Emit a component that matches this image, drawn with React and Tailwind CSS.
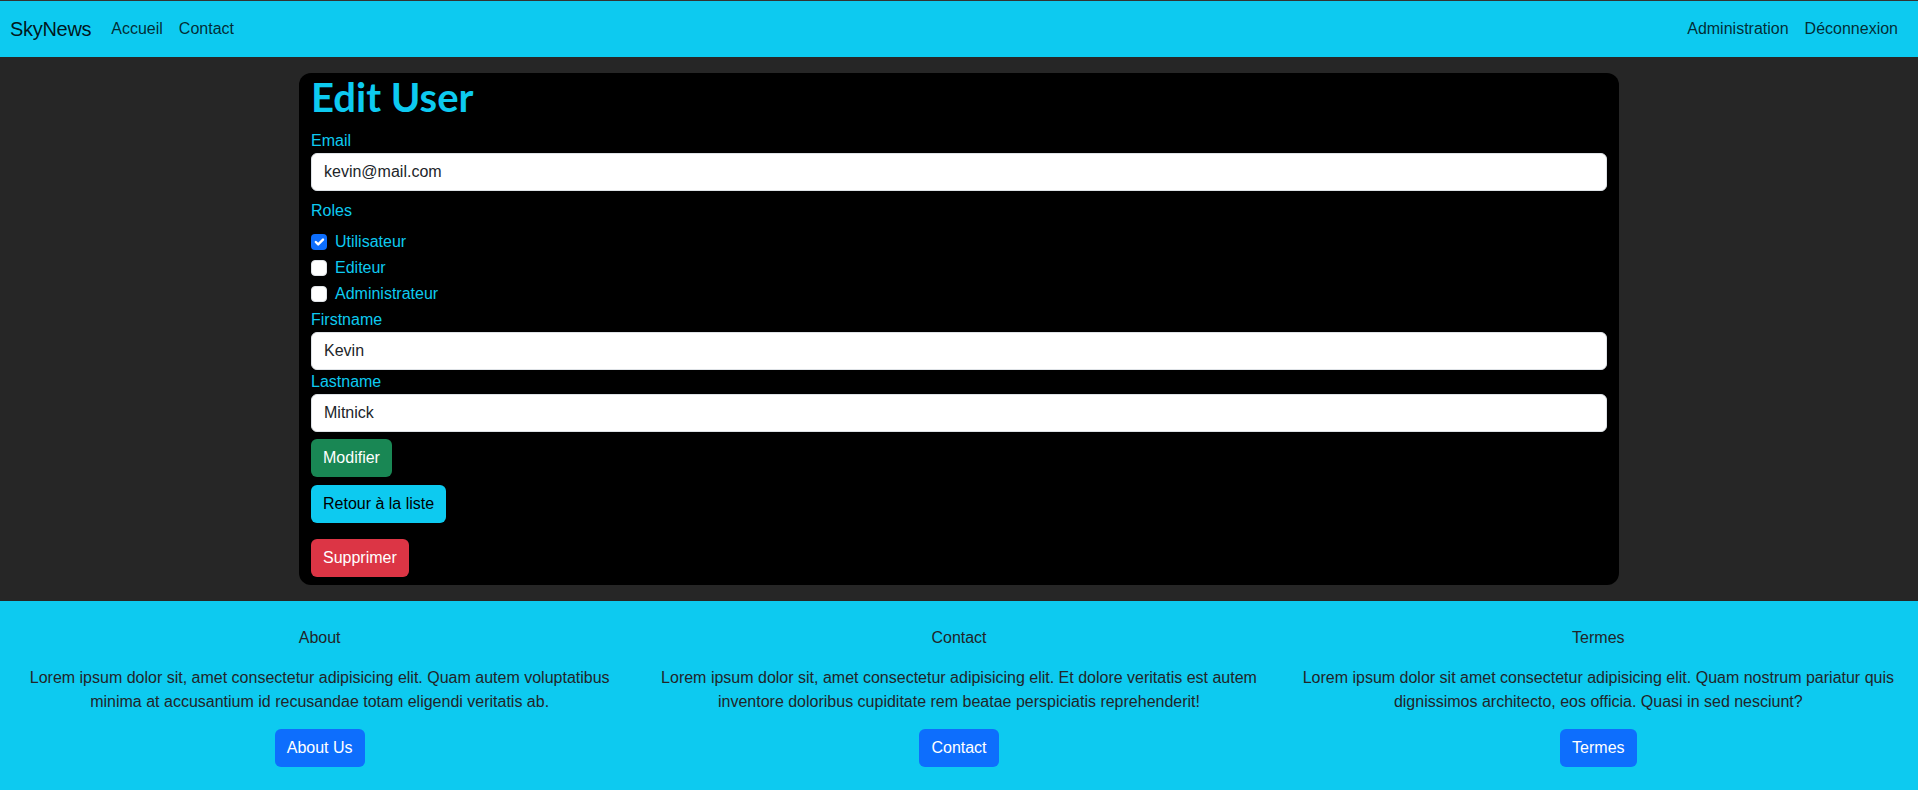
import React from 'react';

// Case à cocher façon Bootstrap
const RoleCheck = ({ checked, label }) => (
  <div className="flex items-center h-6 mb-[2px]">
    {checked ? (
      <span className="w-4 h-4 rounded bg-[#0d6efd] flex items-center justify-center">
        <svg viewBox="0 0 20 20" className="w-4 h-4">
          <path fill="none" stroke="#fff" strokeLinecap="round" strokeLinejoin="round" strokeWidth="3" d="m6 10 3 3 6-6" />
        </svg>
      </span>
    ) : (
      <span className="w-4 h-4 rounded bg-white border border-[#dee2e6]"></span>
    )}
    <span className="ml-2 text-[#0dcaf0] leading-6">{label}</span>
  </div>
);

const Field = ({ label, value }) => (
  <div>
    <label className="block leading-6 text-[#0dcaf0]">{label}</label>
    <input
      readOnly
      defaultValue={value}
      className="block w-full h-[38px] px-3 bg-white border border-[#dee2e6] rounded-md text-[#212529] leading-6 outline-none"
    />
  </div>
);

const footerCols = [
  {
    title: 'About',
    lines: [
      'Lorem ipsum dolor sit, amet consectetur adipisicing elit. Quam autem voluptatibus',
      'minima at accusantium id recusandae totam eligendi veritatis ab.'
    ],
    button: 'About Us'
  },
  {
    title: 'Contact',
    lines: [
      'Lorem ipsum dolor sit, amet consectetur adipisicing elit. Et dolore veritatis est autem',
      'inventore doloribus cupiditate rem beatae perspiciatis reprehenderit!'
    ],
    button: 'Contact'
  },
  {
    title: 'Termes',
    lines: [
      'Lorem ipsum dolor sit amet consectetur adipisicing elit. Quam nostrum pariatur quis',
      'dignissimos architecto, eos officia. Quasi in sed nesciunt?'
    ],
    button: 'Termes'
  }
];

export default function App() {
  return (
    <div className="min-h-[790px] bg-[#262626] font-['Liberation_Sans',Arial,sans-serif] text-base">
      <div className="h-px bg-[#333333]"></div>

      {/* Navbar */}
      <nav className="h-14 bg-[#0dcaf0] flex items-center justify-between pl-[10px] pr-5">
        <div className="flex items-center">
          <a className="text-[20px] leading-[30px] text-black/90 tracking-[-0.3px] mr-5">SkyNews</a>
          <a className="leading-6 text-black/80 mr-4">Accueil</a>
          <a className="leading-6 text-black/80">Contact</a>
        </div>
        <div className="flex items-center gap-4">
          <a className="leading-6 text-black/80">Administration</a>
          <a className="leading-6 text-black/80">Déconnexion</a>
        </div>
      </nav>

      {/* Formulaire */}
      <main className="py-4">
        <div className="mx-auto w-[1320px] bg-black rounded-xl px-3 pb-2">
          <h1 className="mb-2 font-['Lato',sans-serif] text-[40px] leading-[48px] font-bold text-[#0dcaf0]">Edit User</h1>

          <Field label="Email" value="kevin@mail.com" />

          <label className="block mt-2 mb-[7px] leading-6 text-[#0dcaf0]">Roles</label>
          <RoleCheck checked label="Utilisateur" />
          <RoleCheck label="Editeur" />
          <RoleCheck label="Administrateur" />

          <Field label="Firstname" value="Kevin" />
          <Field label="Lastname" value="Mitnick" />

          <div className="mt-[7px]">
            <button className="h-[38px] px-3 rounded-md bg-[#198754] text-white leading-6">Modifier</button>
          </div>
          <div className="mt-2">
            <button className="h-[38px] px-3 rounded-md bg-[#0dcaf0] text-black leading-6">Retour à la liste</button>
          </div>
          <div className="mt-4">
            <button className="h-[38px] px-3 rounded-md bg-[#dc3545] text-white leading-6">Supprimer</button>
          </div>
        </div>
      </main>

      {/* Footer */}
      <footer className="bg-[#0dcaf0] pt-[25px] pb-6 grid grid-cols-3 text-center text-[#212529]">
        {footerCols.map((col) => (
          <div key={col.title} className="px-3">
            <p className="leading-6 mb-4">{col.title}</p>
            <p className="leading-6 mb-[15px]">
              {col.lines[0]}
              <br />
              {col.lines[1]}
            </p>
            <button className="h-[38px] px-3 rounded-md bg-[#0d6efd] text-white leading-6">{col.button}</button>
          </div>
        ))}
      </footer>
    </div>
  );
}
